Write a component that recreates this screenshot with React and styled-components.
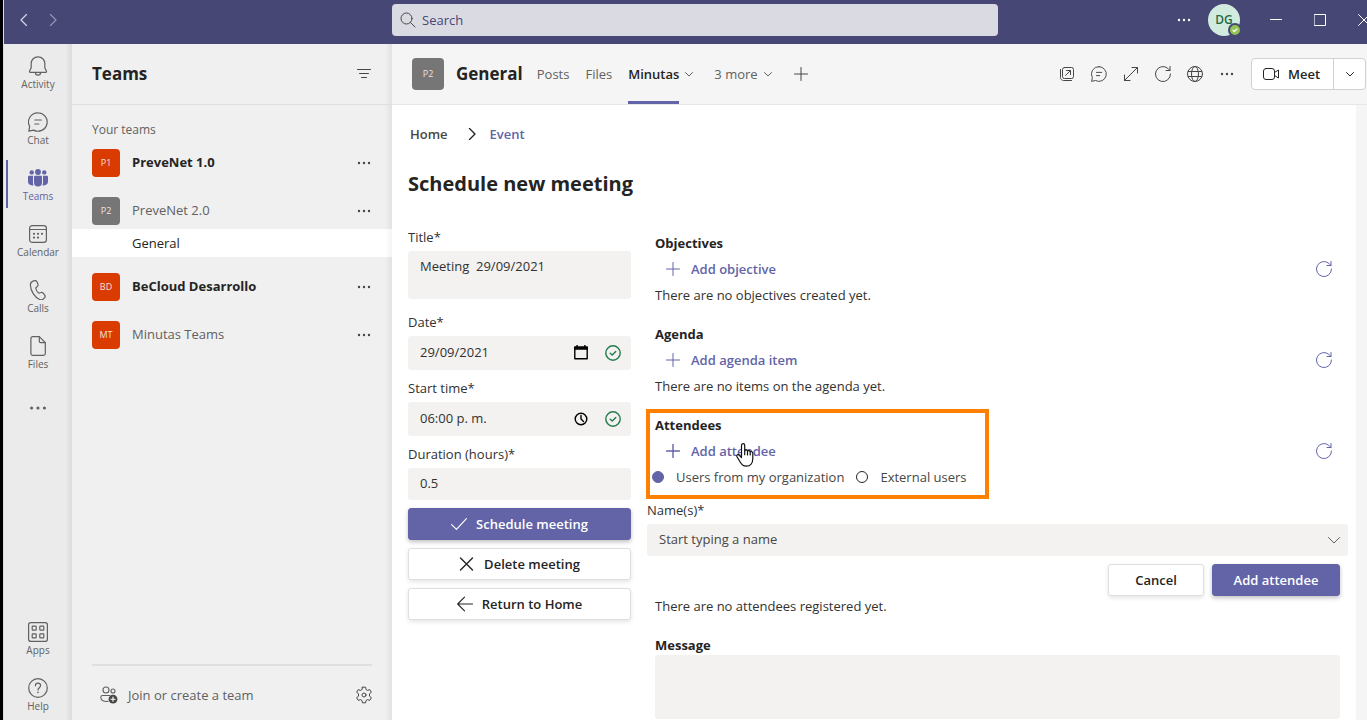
import { useState } from 'react';
import styled, { createGlobalStyle, css } from 'styled-components';

const GlobalStyle = createGlobalStyle`
    * {
        box-sizing: border-box;
    }

    body {
        margin: 0;
        background: #fff;
        color: #252423;
        font-family: "Open Sans", "Noto Sans", sans-serif;
        font-size: 13px;
        line-height: 20px;
    }

    button, input, textarea {
        margin: 0;
        padding: 0;
        border: 0;
        background: none;
        color: inherit;
        font: inherit;
    }

    h1, h2, p, ul, ol {
        margin: 0;
        padding: 0;
        list-style: none;
    }

    a {
        color: inherit;
        text-decoration: none;
    }
`;

/* ---------- icons ---------- */

const Svg = styled.svg`
    display: block;
    flex: none;
    fill: none;
    stroke: currentColor;
    stroke-linecap: round;
    stroke-linejoin: round;
`;

function Icon({ size = 20, box = 20, weight = 1, children, ...rest }) {
    return (
        <Svg width={size} height={size} viewBox={`0 0 ${box} ${box}`} strokeWidth={weight} aria-hidden="true" {...rest}>
            {children}
        </Svg>
    );
}

const BellIcon = () => (
    <Icon weight={1.2}>
        <path d="M10 .8c-3.900 0-6.800 3-6.800 6.800v4.200L1.600 15c-.3.6 0 1.300.7 1.300h15.400c.7 0 1-.7.7-1.300l-1.600-3.200V7.600C16.800 3.800 13.900.8 10 .8Z" />
        <path d="M7.400 16.500a2.600 2.600 0 0 0 5.200 0" />
    </Icon>
);

const ChatIcon = ({ size = 20, weight = 1.2 }) => (
    <Icon size={size} weight={weight}>
        <path d="M10 .8a9.200 9.200 0 1 1-4.400 17.300L.8 19.200l.9-4.700A9.200 9.200 0 0 1 10 .8Z" />
        <path d="M6.800 8h6.600M6.800 12h4" />
    </Icon>
);

const TeamsIcon = () => (
    <Icon>
        <g fill="currentColor" stroke="none">
            <circle cx="10" cy="4" r="2.9" />
            <circle cx="3.7" cy="4.4" r="2.2" />
            <circle cx="16.3" cy="4.4" r="2.2" />
            <path d="M6 8.900c0-.7.5-1.200 1.200-1.200h5.600c.7 0 1.200.5 1.200 1.200v5.500a4 4 0 0 1-8 0Z" />
            <path d="M0 8.900c0-.7.5-1.200 1.200-1.200H5v7.200c0 .9.2 1.700.6 2.400C2.500 18 0 16.500 0 13.600Z" />
            <path d="M20 8.900c0-.7-.5-1.200-1.200-1.200H15v7.200c0 .9-.2 1.700-.6 2.400 3.100.7 5.600-.8 5.600-3.700Z" />
        </g>
    </Icon>
);

const CalendarIcon = () => (
    <Icon weight={1.2}>
        <rect x="1.6" y="1.6" width="16.8" height="16.8" rx="2.6" />
        <path d="M1.600 5.500h16.800" />
        <g fill="currentColor" stroke="none">
            <circle cx="6" cy="9.8" r="1.1" />
            <circle cx="10" cy="9.8" r="1.1" />
            <circle cx="14" cy="9.8" r="1.1" />
            <circle cx="6" cy="13.6" r="1.1" />
            <circle cx="10" cy="13.6" r="1.1" />
        </g>
    </Icon>
);

const PhoneIcon = () => (
    <Icon weight={1.2}>
        <path d="m5 1.100 1.500-.4c1-.3 2 .2 2.400 1.100l1 2.300c.3.800.1 1.700-.5 2.300L7.700 8c.3 1.700 1.800 4.300 3.100 5.200l2.200-.7c.8-.3 1.700 0 2.200.7l1.500 2c.6.8.5 1.900-.2 2.600l-1 1c-1 1-2.500 1.200-3.800.7C6.600 17.500 2.600 10.600 2.400 5.300 2.300 3.300 3.100 1.700 5 1.100Z" />
    </Icon>
);

const FileIcon = () => (
    <Icon weight={1.2}>
        <path d="M4.700.6h6.600l6 6v11c0 1-.8 1.800-1.800 1.800H4.700c-1 0-1.800-.8-1.800-1.800V2.400C2.900 1.400 3.700.6 4.700.6Z" />
        <path d="M11.300.8v4.400c0 .8.6 1.400 1.400 1.400h4.400" />
    </Icon>
);

const AppsIcon = () => (
    <Icon weight={1.2}>
        <rect x=".6" y=".6" width="18.8" height="18.8" rx="2.2" />
        <rect x="4.200" y="4.200" width="4" height="4" rx=".6" />
        <rect x="11.800" y="4.200" width="4" height="4" rx=".6" />
        <rect x="4.200" y="11.800" width="4" height="4" rx=".6" />
        <rect x="11.800" y="11.800" width="4" height="4" rx=".6" />
    </Icon>
);

const HelpIcon = () => (
    <Icon weight={1.2}>
        <circle cx="10" cy="10" r="9.3" />
        <path d="M7.400 7.800c0-1.500 1.100-2.600 2.600-2.600s2.600 1 2.600 2.400c0 2-2.600 2.200-2.600 4.300" />
        <circle cx="10" cy="14.4" r=".8" fill="currentColor" stroke="none" />
    </Icon>
);

const DotsIcon = ({ size = 14 }) => (
    <Icon size={size} box={14}>
        <g fill="currentColor" stroke="none">
            <circle cx="2" cy="7" r="1.2" />
            <circle cx="7" cy="7" r="1.2" />
            <circle cx="12" cy="7" r="1.2" />
        </g>
    </Icon>
);

const ChevronIcon = ({ size = 8, weight = 1 }) => (
    <Icon size={size} box={size} weight={weight}>
        <path d={size > 8 ? 'm.5 3.500 5.500 5.500 5.500-5.500' : 'M.5 2.500 4 6l3.500-3.500'} />
    </Icon>
);

const PlusIcon = ({ size = 14, weight = 1 }) => (
    <Icon size={size} box={14} weight={weight}>
        <path d="M7 .5v13M.5 7h13" />
    </Icon>
);

const RefreshIcon = () => (
    <Icon size={16} box={16}>
        <path d="M15.500 8A7.500 7.500 0 1 1 12.800 2.300L15 4.500" />
        <path d="M15 .5v4h-4" />
    </Icon>
);

const FilterIcon = () => (
    <Icon size={14} box={14}>
        <path d="M.5 2.500h13M2.500 6.500h9M4.500 10.500h5" />
    </Icon>
);

const GearIcon = () => (
    <Icon size={18} box={18}>
        <path d="M7.400 1.200h3.200l.4 2.300 1.500.9 2.200-.8 1.700 2.700-1.900 1.500v2.400l1.900 1.500-1.700 2.700-2.200-.8-1.500.9-.4 2.300H7.400L7 14.500l-1.500-.9-2.200.8-1.700-2.700 1.900-1.500V7.800L1.600 6.300l1.700-2.700 2.200.8L7 3.500Z" />
        <circle cx="9" cy="9" r="2" />
    </Icon>
);

const PeopleAddIcon = () => (
    <Icon size={18} box={18} weight={1.1}>
        <circle cx="6" cy="4" r="3" />
        <circle cx="13" cy="5" r="2" />
        <path d="M8 15.400c-3.600.5-7.200-.8-7.200-4 0-1.100.7-1.900 1.700-1.900h7.300" />
        <circle cx="13" cy="13.2" r="4.4" fill="#484644" stroke="none" />
        <path d="M13 11.100v4.200M10.900 13.200h4.200" stroke="#fff" />
    </Icon>
);

const SearchIcon = () => (
    <Icon size={16} box={16}>
        <circle cx="6.5" cy="6.5" r="5.5" />
        <path d="m10.600 10.600 4.400 4.400" />
    </Icon>
);

const PopOutIcon = () => (
    <Icon size={16} box={16}>
        <rect x="3.5" y="1.5" width="11" height="11" rx="2" />
        <path d="M1.500 3.500v8c0 1.700 1.300 3 3 3h8M6.500 9.500l5-5M7.500 4.500h4v4" />
    </Icon>
);

const ExpandIcon = () => (
    <Icon size={16} box={16}>
        <path d="M1.500 14.500l13-13M9 1.500h5.500V7M1.500 9v5.500H7" />
    </Icon>
);

const GlobeIcon = () => (
    <Icon size={16} box={16}>
        <circle cx="8" cy="8" r="7.5" />
        <ellipse cx="8" cy="8" rx="3.5" ry="7.5" />
        <path d="M1.300 5.500h13.400M1.300 10.500h13.400" />
    </Icon>
);

const CameraIcon = () => (
    <Icon size={16} box={16}>
        <rect x=".5" y="2.5" width="11" height="11" rx="2.5" />
        <path d="m11.500 6.500 4-2.500v8l-4-2.500" />
    </Icon>
);

const DateIcon = () => (
    <Icon size={16} box={16}>
        <rect x="1.8" y="2.3" width="12.4" height="11.4" strokeWidth="1.4" />
        <path d="M1.200 1.600h13.600v3.200H1.200ZM3.400 0h1.400v2H3.400ZM11.200 0h1.400v2h-1.400Z" fill="currentColor" stroke="none" />
    </Icon>
);

const ClockIcon = () => (
    <Icon size={14} box={14} weight={1.4}>
        <circle cx="7" cy="7" r="5.8" />
        <path d="M7 3.500V7l2.500 2.500" />
    </Icon>
);

const ValidIcon = () => (
    <Icon size={16} box={16} weight={1.4}>
        <circle cx="8" cy="8" r="7.2" />
        <path d="m5.200 8.300 2 1.800 3.600-3.600" />
    </Icon>
);

const CheckIcon = () => (
    <Icon size={16} box={16} weight={1.2}>
        <path d="m.6 8.600 4.900 4.800L15.400 2.600" />
    </Icon>
);

const CancelIcon = () => (
    <Icon size={16} box={16} weight={1.4}>
        <path d="m1.500 2 12 12M13.500 2l-12 12" />
    </Icon>
);

const BackArrowIcon = () => (
    <Icon size={16} box={16} weight={1.1}>
        <path d="M15.500 8H.7M7.500 1.200.7 8l6.800 6.800" />
    </Icon>
);

const AngleIcon = ({ left, size = 12, weight = 1.2 }) => (
    <Icon size={size} box={12} weight={weight}>
        <path d={left ? 'M8.500.5 3 6l5.500 5.500' : 'M3.500.5 9 6l-5.500 5.500'} />
    </Icon>
);

/* ---------- shell ---------- */

const Page = styled.div`
    display: flex;
    flex-direction: column;
    height: 100vh;
    overflow: hidden;
    border-left: 3px solid #000;
    padding-left: 1px;
    background: #dcdcdc;
`;

const Body = styled.div`
    display: flex;
    flex: 1;
    min-height: 0;
`;

const IconButton = styled.button`
    display: flex;
    align-items: center;
    justify-content: center;
    width: ${({ $width }) => $width || 32}px;
    height: 32px;
    flex: none;
    color: ${({ $color }) => $color || '#484644'};
    cursor: pointer;
`;

const TitleBar = styled.header`
    display: grid;
    grid-template-columns: 388px minmax(0, 606px) 1fr;
    align-items: center;
    height: 44px;
    flex: none;
    padding-bottom: 4px;
    background: #464775;
    color: #fff;
`;

const History = styled.nav`
    display: flex;
    padding-left: 5px;
`;

const SearchBox = styled.label`
    display: flex;
    align-items: center;
    gap: 6px;
    height: 32px;
    padding: 0 8px;
    border-radius: 4px;
    background: #dadae3;
    color: #484644;

    input {
        flex: 1;
        min-width: 0;
        outline: none;
        color: #464775;
    }

    input::placeholder {
        color: #464775;
        opacity: 1;
    }
`;

const WindowControls = styled.div`
    display: flex;
    align-items: center;
    justify-content: flex-end;
    min-width: 0;
`;

const UserAvatar = styled.button`
    position: relative;
    width: 32px;
    height: 32px;
    margin: 0 14px 0 8px;
    border-radius: 50%;
    background: #d1ebdf;
    color: #1f6a45;
    font-size: 12px;
    font-weight: 600;
`;

const Presence = styled.span`
    position: absolute;
    right: -2px;
    bottom: -1px;
    display: flex;
    align-items: center;
    justify-content: center;
    width: 14px;
    height: 14px;
    border: 2px solid #464775;
    border-radius: 50%;
    background: #92c353;
    color: #fff;
`;

const CloseButton = styled(IconButton)`
    justify-content: flex-start;
    padding-left: 16px;
    overflow: hidden;
`;

/* ---------- app rail ---------- */

const Rail = styled.nav`
    display: flex;
    flex-direction: column;
    justify-content: space-between;
    width: 68px;
    flex: none;
    background: linear-gradient(to left, #dcdcdc, #ebebeb 7px);
`;

const RailGroup = styled.div`
    display: flex;
    flex-direction: column;
    gap: 2px;
`;

const RailItem = styled.button`
    display: flex;
    flex-direction: column;
    align-items: center;
    gap: 1px;
    height: 54px;
    padding: 12px 0 7px;
    color: #616161;
    font-size: 10px;
    line-height: 14px;
    cursor: pointer;

    ${({ $active }) => $active && css`
        background: linear-gradient(#6264a7, #6264a7) 2px 4px / 2px 48px no-repeat;
        color: #6264a7;
    `}
`;

const RailMore = styled(RailItem)`
    justify-content: center;
    padding: 2px 0 0;
`;

/* ---------- teams list ---------- */

const TeamsPanel = styled.aside`
    display: flex;
    flex-direction: column;
    width: 320px;
    flex: none;
    background: linear-gradient(to left, #e2e2e2, #f0f0f0 7px);
`;

const PanelHeader = styled.div`
    display: flex;
    align-items: center;
    justify-content: space-between;
    height: 61px;
    padding: 0 12px 0 20px;
    border-bottom: 1px solid #e1dfdd;

    h2 {
        font-size: 17px;
        font-weight: 700;
        line-height: 24px;
    }
`;

const ListLabel = styled.p`
    padding: 17px 20px 11px;
    color: #616161;
    font-size: 12px;
    line-height: 16px;
`;

const TeamItem = styled.li`
    & + & {
        margin-top: 16px;
    }
`;

const TeamRow = styled.div`
    display: flex;
    align-items: center;
    gap: 12px;
    height: 32px;
    padding: 0 12px 4px 20px;
`;

const TeamName = styled.a`
    flex: 1;
    padding-bottom: 2px;
    color: ${({ $unread }) => ($unread ? '#252423' : '#616161')};
    font-weight: ${({ $unread }) => ($unread ? 700 : 400)};
`;

const TeamAvatar = styled.span`
    display: flex;
    align-items: center;
    justify-content: center;
    width: ${({ $size }) => $size || 28}px;
    height: ${({ $size }) => $size || 28}px;
    flex: none;
    border-radius: 4px;
    background: ${({ $color }) => $color};
    color: #f0e0dc;
    font-size: 9px;
    font-weight: 500;
`;

const Channel = styled.a`
    display: block;
    padding: 4px 20px 4px 60px;
    background: linear-gradient(to left, #f4f4f4, #fff 7px);
`;

const PanelFooter = styled.div`
    display: flex;
    align-items: center;
    justify-content: space-between;
    height: 56px;
    margin: auto 20px 0;
    padding-top: 4px;
    border-top: 2px solid #e1dfdd;
    color: #616161;
`;

const JoinButton = styled.button`
    display: flex;
    align-items: center;
    gap: 10px;
    padding-left: 8px;
    cursor: pointer;
`;

/* ---------- channel header ---------- */

const Main = styled.main`
    display: flex;
    flex-direction: column;
    flex: 1;
    min-width: 0;
    background: #fff;
`;

const ChannelHeader = styled.div`
    display: flex;
    align-items: center;
    height: 61px;
    flex: none;
    padding: 0 1px 0 20px;
    border-bottom: 1px solid #e6e6e6;
    background: #f5f5f5;
`;

const ChannelTitle = styled.h2`
    margin: 0 14px 0 12px;
    font-size: 17px;
    font-weight: 700;
    line-height: 24px;
`;

const Tabs = styled.nav`
    display: flex;
    align-items: center;
    gap: 16px;
`;

const TabGroup = styled.div`
    display: flex;
    align-items: center;
    gap: 6px;
    margin-right: 5px;
    color: #616161;
`;

const Tab = styled.button`
    height: 60px;
    color: ${({ $active }) => ($active ? '#252423' : '#616161')};
    font-weight: ${({ $active }) => ($active ? 600 : 400)};
    box-shadow: ${({ $active }) => ($active ? 'inset 0 -3px #6264a7' : 'none')};
    cursor: pointer;
`;

const HeaderTools = styled.div`
    display: flex;
    align-items: center;
    margin-left: auto;
`;

const MeetGroup = styled.div`
    display: flex;
    height: 32px;
    margin-left: 8px;
    border: 1px solid #d1d1d1;
    border-radius: 4px;
    background: #fff;
`;

const MeetButton = styled.button`
    display: flex;
    align-items: center;
    gap: 9px;
    width: 82px;
    padding-left: 11px;
    border-right: 1px solid #d1d1d1;
    font-weight: 600;
`;

const MeetMenu = styled.button`
    display: flex;
    align-items: center;
    justify-content: center;
    width: 31px;
`;

/* ---------- meeting form ---------- */

const Content = styled.div`
    flex: 1;
    min-height: 0;
    padding: 19px 16px 0;
    border-right: 11px solid #f5f5f5;
`;

const Breadcrumb = styled.ol`
    display: flex;
    align-items: center;
    gap: 12px;
    padding-left: 2px;
    color: #484644;
    font-weight: 600;

    svg {
        margin-left: 6px;
        color: #252423;
    }

    a[aria-current] {
        color: #6264a7;
    }
`;

const PageTitle = styled.h1`
    margin: 26px 0 30px;
    font-size: 20px;
    font-weight: 700;
    line-height: 28px;
`;

const FormGrid = styled.form`
    display: grid;
    grid-template-columns: 223px minmax(0, 1fr);
    gap: 24px;
    align-items: start;
`;

const Fields = styled.div`
    display: flex;
    flex-direction: column;
    gap: 9px;
`;

const Field = styled.div`
    display: flex;
    flex-direction: column;
    gap: 5px;
    color: #323130;

    label {
        line-height: 18px;
    }
`;

const TitleInput = styled.textarea`
    display: block;
    height: 48px;
    margin-bottom: 5px;
    padding: 5px 12px;
    border-radius: 3px;
    background: #f3f2f1;
    resize: none;
    outline: none;
`;

const Control = styled.div`
    display: flex;
    align-items: center;
    height: ${({ $height }) => $height || 32}px;
    padding: 0 10px 0 12px;
    border-radius: 3px;
    background: #f3f2f1;

    input {
        flex: 1;
        min-width: 0;
        padding-bottom: 2px;
        outline: none;
    }

    input::placeholder {
        color: #484644;
        opacity: 1;
    }
`;

const ValidMark = styled.span`
    margin-left: 16px;
    color: #237b4b;
`;

const Actions = styled.div`
    display: flex;
    flex-direction: column;
    gap: 8px;
    margin-top: 8px;
`;

const Button = styled.button`
    display: flex;
    align-items: center;
    justify-content: center;
    gap: 9px;
    height: 32px;
    width: ${({ $width }) => ($width ? `${$width}px` : 'auto')};
    border: 1px solid ${({ $primary }) => ($primary ? '#6264a7' : '#e1dfdd')};
    border-radius: 3px;
    background: ${({ $primary }) => ($primary ? '#6264a7' : '#fff')};
    color: ${({ $primary }) => ($primary ? '#fff' : '#252423')};
    font-weight: 600;
    box-shadow: 0 2px 4px rgba(0, 0, 0, ${({ $primary }) => ($primary ? 0.25 : 0.1)});
    cursor: pointer;
`;

const Sections = styled.div`
    display: flex;
    flex-direction: column;
    gap: 19px;
    padding-top: 5px;
`;

const Section = styled.section`
    position: relative;

    h2 {
        font-size: 13px;
        font-weight: 700;
        line-height: 20px;
    }

    p {
        color: #323130;
    }
`;

const AddRow = styled.div`
    display: flex;
    align-items: center;
    justify-content: space-between;
    height: 32px;
`;

const AddButton = styled.button`
    position: relative;
    display: flex;
    align-items: center;
    gap: 11px;
    padding-left: 11px;
    color: #6264a7;
    font-weight: 600;
    cursor: pointer;
`;

const RadioGroup = styled.div`
    display: flex;
    gap: 12px;
    margin-left: -3px;
    color: #484644;
`;

const Radio = styled.label`
    display: flex;
    align-items: center;
    gap: 12px;

    input {
        width: 12px;
        height: 12px;
        margin: 0;
        appearance: none;
        border: 1px solid #252423;
        border-radius: 50%;
    }

    input:checked {
        border-color: #6264a7;
        background: #6264a7;
    }
`;

const Highlight = styled.div`
    position: absolute;
    top: -6px;
    left: -9px;
    width: 343px;
    height: 90px;
    border: 4px solid #ff7f00;
    pointer-events: none;
`;

const Pointer = styled.svg`
    position: absolute;
    top: 2px;
    right: 22px;
    pointer-events: none;
`;

const NameField = styled(Field)`
    margin: 14px -8px 8px;

    ${Control} {
        padding-right: 8px;
    }
`;

const ButtonRow = styled.div`
    display: flex;
    justify-content: flex-end;
    gap: 8px;
`;

const MessageInput = styled.textarea`
    display: block;
    width: 100%;
    height: 64px;
    padding: 6px 12px;
    border-radius: 3px;
    background: #f3f2f1;
    resize: none;
    outline: none;
`;

const railItems = [
    { label: 'Activity', icon: <BellIcon /> },
    { label: 'Chat', icon: <ChatIcon /> },
    { label: 'Teams', icon: <TeamsIcon />, active: true },
    { label: 'Calendar', icon: <CalendarIcon /> },
    { label: 'Calls', icon: <PhoneIcon /> },
    { label: 'Files', icon: <FileIcon /> },
];

const teams = [
    { initials: 'P1', name: 'PreveNet 1.0', color: '#da3b01', unread: true },
    { initials: 'P2', name: 'PreveNet 2.0', color: '#767676', channels: ['General'] },
    { initials: 'BD', name: 'BeCloud Desarrollo', color: '#da3b01', unread: true },
    { initials: 'MT', name: 'Minutas Teams', color: '#da3b01' },
];

function TopBar() {
    return (
        <TitleBar>
            <History>
                <IconButton $width={29} $color="#d5d5e6" aria-label="Back"><AngleIcon left /></IconButton>
                <IconButton $width={29} $color="#9293b5" aria-label="Forward"><AngleIcon /></IconButton>
            </History>
            <SearchBox>
                <SearchIcon />
                <input type="search" placeholder="Search" aria-label="Search" />
            </SearchBox>
            <WindowControls>
                <IconButton $color="#fff" aria-label="Settings and more"><DotsIcon /></IconButton>
                <UserAvatar>
                    DG
                    <Presence>
                        <Icon size={8} box={8} weight={1.2}><path d="m2 4.200 1.400 1.300L6 2.900" /></Icon>
                    </Presence>
                </UserAvatar>
                <IconButton $width={44} $color="#fff" aria-label="Minimize">
                    <Icon size={12} box={12}><path d="M.5 5.500h11" /></Icon>
                </IconButton>
                <IconButton $width={44} $color="#fff" aria-label="Maximize">
                    <Icon size={12} box={12}><rect x=".5" y=".5" width="11" height="11" /></Icon>
                </IconButton>
                <CloseButton $width={25} $color="#fff" aria-label="Close">
                    <Icon size={12} box={12}><path d="m.5.5 11 11M11.500.5l-11 11" /></Icon>
                </CloseButton>
            </WindowControls>
        </TitleBar>
    );
}

function AppRail() {
    return (
        <Rail>
            <RailGroup>
                {railItems.map(({ label, icon, active }) => (
                    <RailItem key={label} $active={active}>
                        {icon}
                        {label}
                    </RailItem>
                ))}
                <RailMore aria-label="More apps"><DotsIcon size={18} /></RailMore>
            </RailGroup>
            <RailGroup>
                <RailItem><AppsIcon />Apps</RailItem>
                <RailItem><HelpIcon />Help</RailItem>
            </RailGroup>
        </Rail>
    );
}

function TeamsList() {
    return (
        <TeamsPanel>
            <PanelHeader>
                <h2>Teams</h2>
                <IconButton aria-label="Filter"><FilterIcon /></IconButton>
            </PanelHeader>
            <ListLabel>Your teams</ListLabel>
            <ul>
                {teams.map((team) => (
                    <TeamItem key={team.name}>
                        <TeamRow>
                            <TeamAvatar $color={team.color}>{team.initials}</TeamAvatar>
                            <TeamName href="#" $unread={team.unread}>{team.name}</TeamName>
                            <IconButton aria-label={`More options for ${team.name}`}><DotsIcon /></IconButton>
                        </TeamRow>
                        {team.channels?.map((channel) => (
                            <Channel key={channel} href="#">{channel}</Channel>
                        ))}
                    </TeamItem>
                ))}
            </ul>
            <PanelFooter>
                <JoinButton><PeopleAddIcon />Join or create a team</JoinButton>
                <IconButton $width={16} aria-label="Manage teams"><GearIcon /></IconButton>
            </PanelFooter>
        </TeamsPanel>
    );
}

function ChannelBar() {
    return (
        <ChannelHeader>
            <TeamAvatar $size={32} $color="#767676">P2</TeamAvatar>
            <ChannelTitle>General</ChannelTitle>
            <Tabs>
                <Tab>Posts</Tab>
                <Tab>Files</Tab>
                <TabGroup>
                    <Tab $active>Minutas</Tab>
                    <ChevronIcon />
                </TabGroup>
                <TabGroup>
                    <Tab>3 more</Tab>
                    <ChevronIcon />
                </TabGroup>
                <IconButton $width={16} aria-label="Add a tab"><PlusIcon /></IconButton>
            </Tabs>
            <HeaderTools>
                <IconButton aria-label="Pop out"><PopOutIcon /></IconButton>
                <IconButton aria-label="Conversation"><ChatIcon size={16} /></IconButton>
                <IconButton aria-label="Expand tab"><ExpandIcon /></IconButton>
                <IconButton aria-label="Reload tab"><RefreshIcon /></IconButton>
                <IconButton aria-label="Go to website"><GlobeIcon /></IconButton>
                <IconButton aria-label="More options"><DotsIcon /></IconButton>
                <MeetGroup>
                    <MeetButton><CameraIcon />Meet</MeetButton>
                    <MeetMenu aria-label="Meeting options"><ChevronIcon /></MeetMenu>
                </MeetGroup>
            </HeaderTools>
        </ChannelHeader>
    );
}

function AddAction({ label, strong, children }) {
    return (
        <AddRow>
            <AddButton type="button">
                <PlusIcon weight={strong ? 1.4 : 1} />
                {label}
                {children}
            </AddButton>
            <IconButton type="button" $color="#6264a7" aria-label={`Refresh: ${label}`}><RefreshIcon /></IconButton>
        </AddRow>
    );
}

function MeetingFields() {
    return (
        <div>
            <Fields>
                <Field>
                    <label htmlFor="title">Title*</label>
                    <TitleInput id="title" defaultValue="Meeting  29/09/2021" />
                </Field>
                <Field>
                    <label htmlFor="date">Date*</label>
                    <Control $height={34}>
                        <input id="date" defaultValue="29/09/2021" />
                        <IconButton type="button" $width={16} $color="#000" aria-label="Pick a date"><DateIcon /></IconButton>
                        <ValidMark><ValidIcon /></ValidMark>
                    </Control>
                </Field>
                <Field>
                    <label htmlFor="start">Start time*</label>
                    <Control $height={34}>
                        <input id="start" defaultValue="06:00 p. m." />
                        <IconButton type="button" $width={16} $color="#000" aria-label="Pick a time"><ClockIcon /></IconButton>
                        <ValidMark><ValidIcon /></ValidMark>
                    </Control>
                </Field>
                <Field>
                    <label htmlFor="duration">Duration (hours)*</label>
                    <Control>
                        <input id="duration" defaultValue="0.5" />
                    </Control>
                </Field>
            </Fields>
            <Actions>
                <Button type="button" $primary><CheckIcon />Schedule meeting</Button>
                <Button type="button"><CancelIcon />Delete meeting</Button>
                <Button type="button"><BackArrowIcon />Return to Home</Button>
            </Actions>
        </div>
    );
}

function Attendees() {
    const [source, setSource] = useState('organization');

    return (
        <Section>
            <h2>Attendees</h2>
            <AddAction label="Add attendee" strong>
                <Pointer width="18" height="24" viewBox="0 0 18 24" fill="#fff" stroke="#111" strokeWidth="1.2" strokeLinejoin="round" strokeLinecap="round">
                    <path d="M5.500 14.500V2.400c0-2.300 3.200-2.300 3.200 0v5.300c.6-1.300 2.700-1 2.800.5.7-1 2.600-.6 2.700.8.8-.8 2.600-.3 2.600 1.200v5.300c0 4.600-2.300 7.700-6.600 7.700-3 0-4.400-1.200-5.900-3.900L1 13.800c-.9-1.800 1.200-2.900 2.300-1.500Z" />
                    <path d="M8.700 7.700v4M11.500 8.500V12M14.200 9.500V12" fill="none" />
                </Pointer>
            </AddAction>
            <RadioGroup role="radiogroup" aria-label="Attendee source">
                <Radio>
                    <input type="radio" name="source" checked={source === 'organization'} onChange={() => setSource('organization')} />
                    Users from my organization
                </Radio>
                <Radio>
                    <input type="radio" name="source" checked={source === 'external'} onChange={() => setSource('external')} />
                    External users
                </Radio>
            </RadioGroup>
            <NameField>
                <label htmlFor="names">Name(s)*</label>
                <Control>
                    <input id="names" role="combobox" aria-expanded="false" placeholder="Start typing a name" />
                    <IconButton type="button" $width={12} $color="#616161" aria-label="Show names"><ChevronIcon size={12} /></IconButton>
                </Control>
            </NameField>
            <ButtonRow>
                <Button type="button" $width={96}>Cancel</Button>
                <Button type="button" $width={128} $primary>Add attendee</Button>
            </ButtonRow>
            <p>There are no attendees registered yet.</p>
            <Highlight />
        </Section>
    );
}

export default function App() {
    return (
        <Page>
            <GlobalStyle />
            <TopBar />
            <Body>
                <AppRail />
                <TeamsList />
                <Main>
                    <ChannelBar />
                    <Content>
                        <Breadcrumb>
                            <li><a href="#">Home</a></li>
                            <AngleIcon weight={1.4} />
                            <li><a href="#" aria-current="page">Event</a></li>
                        </Breadcrumb>
                        <PageTitle>Schedule new meeting</PageTitle>
                        <FormGrid>
                            <MeetingFields />
                            <Sections>
                                <Section>
                                    <h2>Objectives</h2>
                                    <AddAction label="Add objective" />
                                    <p>There are no objectives created yet.</p>
                                </Section>
                                <Section>
                                    <h2>Agenda</h2>
                                    <AddAction label="Add agenda item" />
                                    <p>There are no items on the agenda yet.</p>
                                </Section>
                                <Attendees />
                                <Section>
                                    <h2><label htmlFor="message">Message</label></h2>
                                    <MessageInput id="message" />
                                </Section>
                            </Sections>
                        </FormGrid>
                    </Content>
                </Main>
            </Body>
        </Page>
    );
}
